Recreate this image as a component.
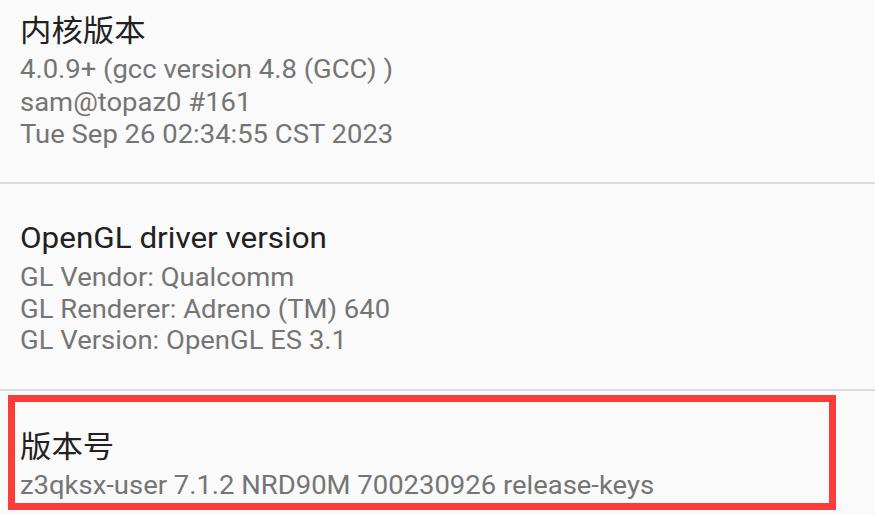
import React from "react";

const font = { fontFamily: "Roboto, 'Noto Sans CJK SC', sans-serif" };

function Title({ children }: { children: React.ReactNode }) {
  return (
    <div className="text-[29.5px] leading-[36px] text-[#212121] whitespace-nowrap origin-left scale-x-[1.065]">
      {children}
    </div>
  );
}

function Sub({ children, lh }: { children: React.ReactNode; lh: string }) {
  return (
    <div className={`text-[26px] ${lh} text-[#757575] whitespace-nowrap origin-left scale-x-[1.055]`}>
      {children}
    </div>
  );
}

export default function App() {
  return (
    <div className="w-[875px] h-[515px] bg-[#fafafa] overflow-hidden" style={font}>
      <div className="h-[182px] pl-[20px] pt-[13px]">
        <Title>内核版本</Title>
        <div className="mt-[4px]">
          <Sub lh="leading-[32.7px]">4.0.9+ (gcc version 4.8 (GCC) )</Sub>
          <Sub lh="leading-[32.7px]">sam@topaz0 #161</Sub>
          <Sub lh="leading-[32.7px]">Tue Sep 26 02:34:55 CST 2023</Sub>
        </div>
      </div>
      <div className="h-[2px] bg-[#dcdcdc]" />
      <div className="h-[205px] pl-[20px] pt-[36px]">
        <Title>OpenGL driver version</Title>
        <div className="mt-[6px]">
          <Sub lh="leading-[31.6px]">GL Vendor: Qualcomm</Sub>
          <Sub lh="leading-[31.6px]">GL Renderer: Adreno (TM) 640</Sub>
          <Sub lh="leading-[31.6px]">GL Version: OpenGL ES 3.1</Sub>
        </div>
      </div>
      <div className="h-[2px] bg-[#dcdcdc]" />
      <div className="pt-[4px] pl-[8px]">
        <div className="w-[828px] h-[115px] border-[7px] border-[#fc3b3b] pl-[5px] pt-[27px]">
          <Title>版本号</Title>
          <div className="mt-[4px]">
            <Sub lh="leading-[32px]">z3qksx-user 7.1.2 NRD90M 700230926 release-keys</Sub>
          </div>
        </div>
      </div>
    </div>
  );
}
